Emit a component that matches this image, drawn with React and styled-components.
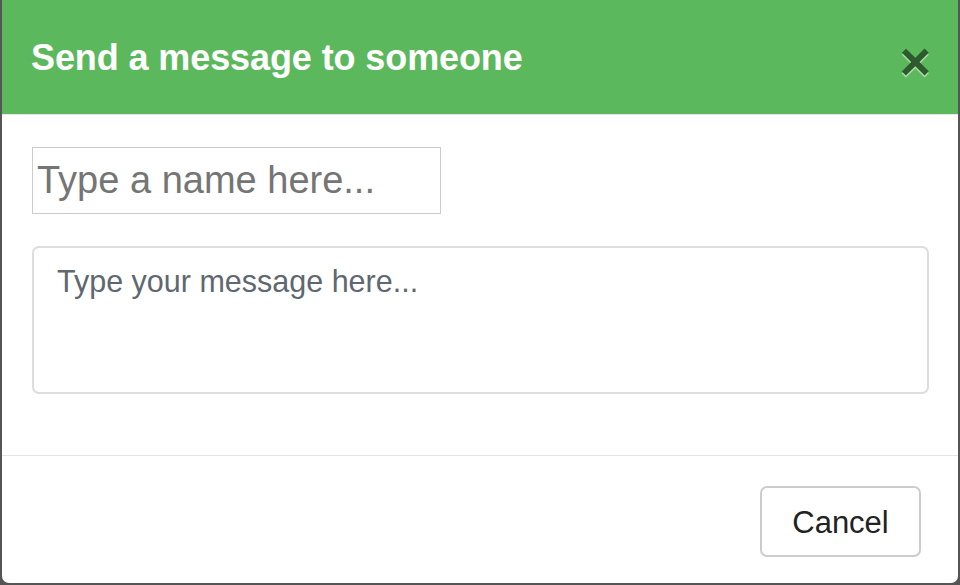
import React from "react";
import styled, { createGlobalStyle } from "styled-components";

const Global = createGlobalStyle`
  html, body { margin: 0; padding: 0; background: #555; }
  body { font-family: "Liberation Sans", Arial, sans-serif; }
  * { box-sizing: border-box; }
`;

const Modal = styled.div`
  margin: 0 2px;
  height: 583px;
  background: #fff;
  border-radius: 0 0 7px 7px;
  display: flex;
  flex-direction: column;
  overflow: hidden;
`;

const Header = styled.div`
  height: 115px;
  flex: none;
  background: #5cb85c;
  border-bottom: 1px solid #e5e5e5;
  display: flex;
  align-items: center;
  justify-content: space-between;
  padding: 0 27px 0 29px;
`;

const Title = styled.h4`
  margin: 0;
  color: #fff;
  font-size: 36px;
  font-weight: 700;
  letter-spacing: -0.1px;
  line-height: 1;
  padding-top: 2px;
`;

const Close = styled.button`
  border: 0;
  background: transparent;
  padding: 0;
  cursor: pointer;
  font-family: "Liberation Sans", Arial, sans-serif;
  font-size: 54px;
  font-weight: 700;
  line-height: 1;
  color: #000;
  opacity: 0.5;
  text-shadow: 0 2px 0 #fff;
  margin-top: 8px;
`;

const Body = styled.div`
  padding: 32px 28px 61px 30px;
  display: flex;
  flex-direction: column;
  gap: 32px;
  border-bottom: 1px solid #e5e5e5;
`;

const NameInput = styled.input`
  width: 409px;
  height: 67px;
  border: 1px solid #ccc;
  border-radius: 0;
  padding: 0 4px;
  font-family: "Liberation Sans", Arial, sans-serif;
  font-size: 38px;
  color: #333;
  outline: none;
  &::placeholder { color: #757575; }
`;

const MessageArea = styled.textarea`
  width: 897px;
  height: 148px;
  border: 2px solid #ddd;
  border-radius: 7px;
  padding: 15px 23px;
  font-family: "Liberation Sans", Arial, sans-serif;
  font-size: 30.5px;
  line-height: 1.2;
  resize: none;
  outline: none;
  color: #333;
  &::placeholder { color: #5f6770; }
`;

const Footer = styled.div`
  padding: 30px 37px 0 0;
  display: flex;
  justify-content: flex-end;
`;

const Button = styled.button`
  width: 161px;
  height: 71px;
  background: #fff;
  border: 2px solid #ccc;
  border-radius: 7px;
  font-family: "Liberation Sans", Arial, sans-serif;
  font-size: 31px;
  color: #222;
  cursor: pointer;
  padding: 2px 0 0;
`;

export default function App() {
  return (
    <>
      <Global />
      <Modal>
        <Header>
          <Title>Send a message to someone</Title>
          <Close aria-label="Close">×</Close>
        </Header>
        <Body>
          <NameInput placeholder="Type a name here..." />
          <MessageArea placeholder="Type your message here..." />
        </Body>
        <Footer>
          <Button>Cancel</Button>
        </Footer>
      </Modal>
    </>
  );
}
